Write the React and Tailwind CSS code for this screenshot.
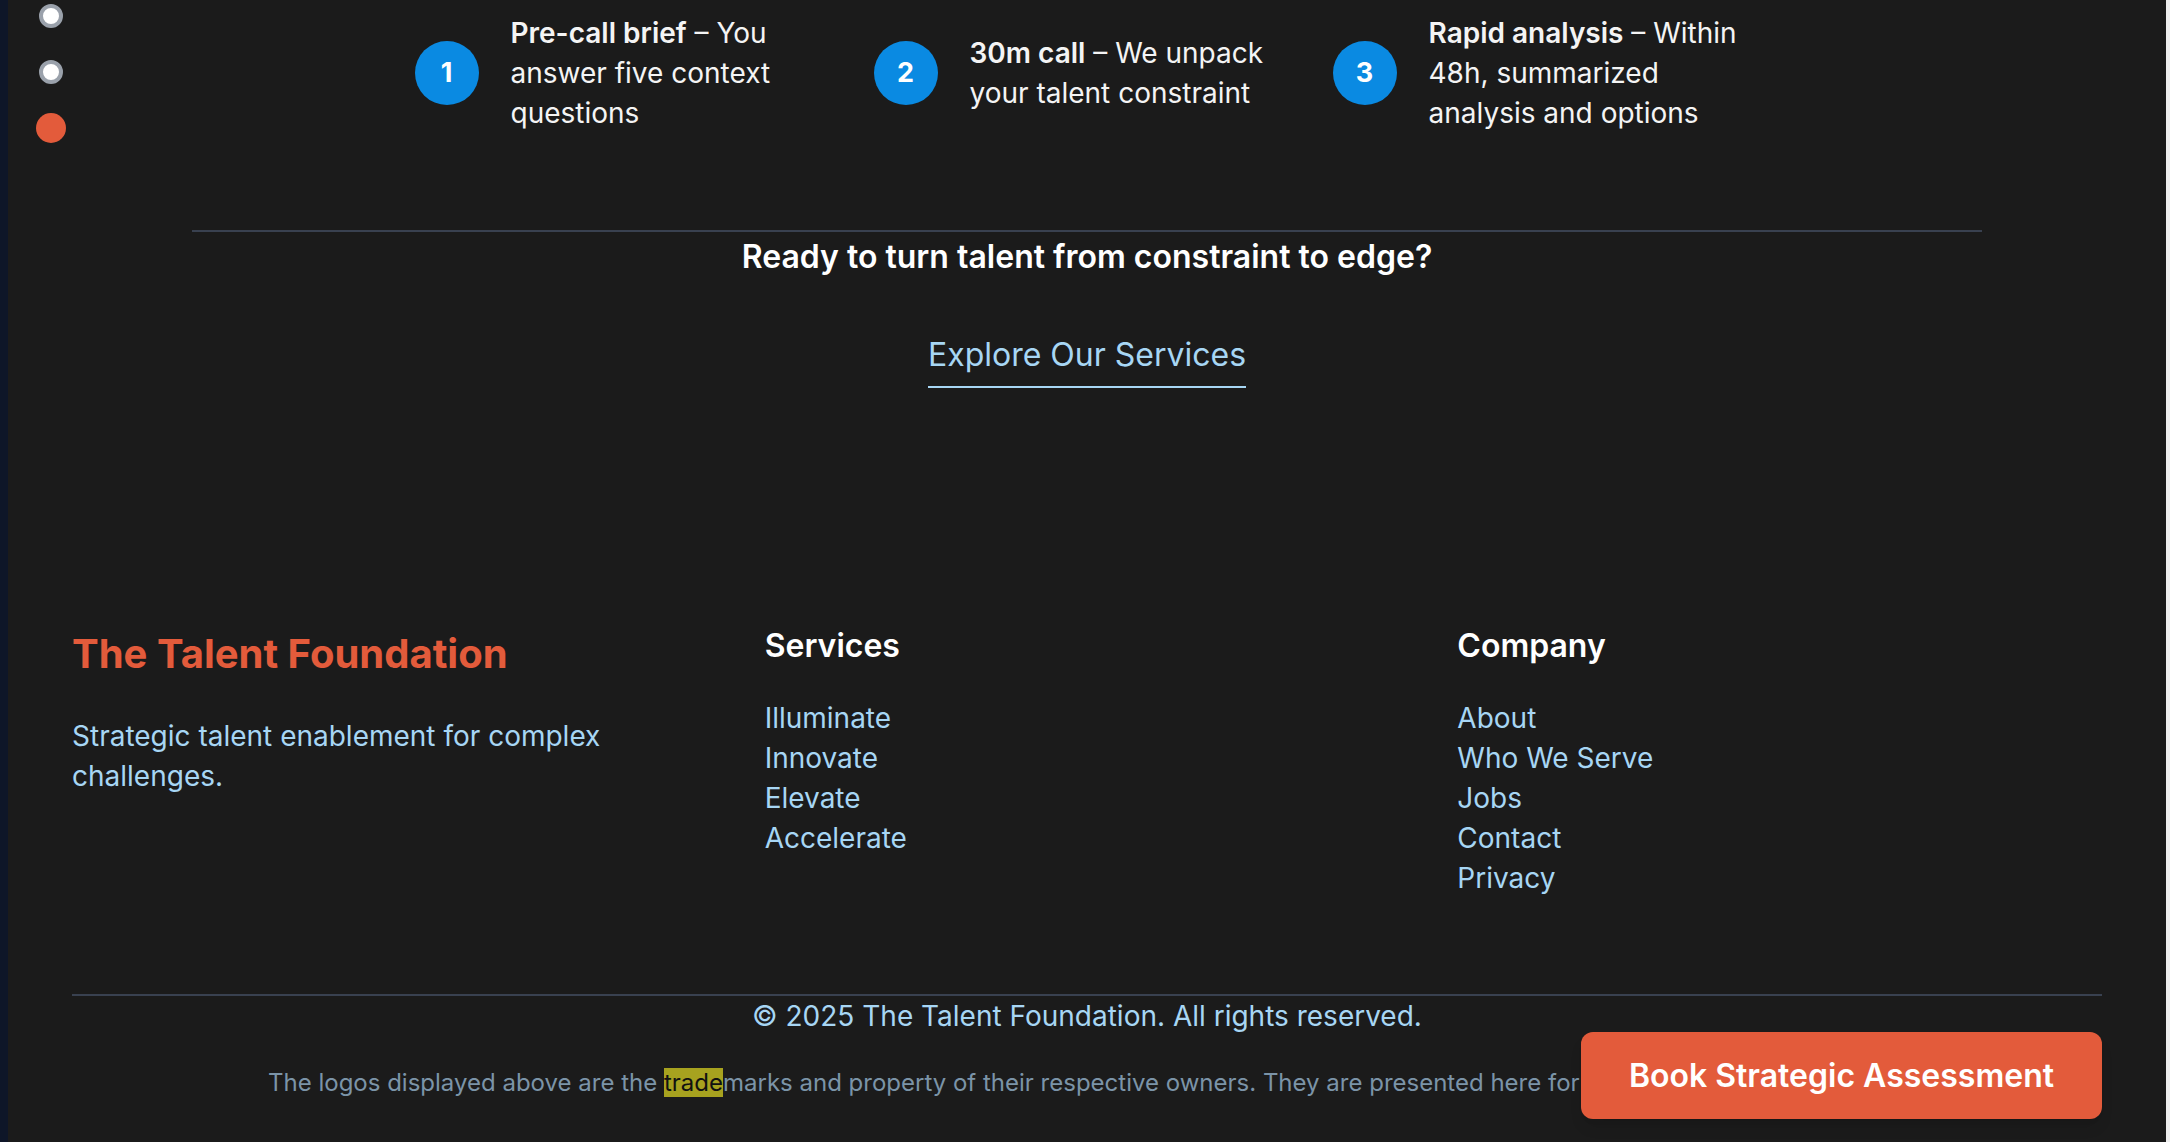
import React from 'react';

// Footer / call-to-action section of a consulting landing page
const steps = [
  { n: 1, title: 'Pre-call brief', text: 'You answer five context questions' },
  { n: 2, title: '30m call', text: 'We unpack your talent constraint' },
  { n: 3, title: 'Rapid analysis', text: 'Within 48h, summarized analysis and options' },
];

const services = ['Illuminate', 'Innovate', 'Elevate', 'Accelerate'];
const company = ['About', 'Who We Serve', 'Jobs', 'Contact', 'Privacy'];

export default function App() {
  return (
    <div
      className="flex w-full h-[1142px] overflow-hidden"
      style={{ fontFamily: 'Inter, "Noto Sans", sans-serif' }}
    >
      <div className="w-2 shrink-0 bg-[#0e1628]" />

      <div className="relative flex-1 min-w-0 bg-[#1b1b1b] overflow-hidden">
        {/* section nav dots */}
        <div className="absolute left-[28px] top-[4px] flex flex-col items-center">
          <span className="w-6 h-6 rounded-full bg-white border-4 border-[#9aa1ab]" />
          <span className="w-6 h-6 mt-8 rounded-full bg-white border-4 border-[#9aa1ab]" />
          <span className="w-[30px] h-[30px] mt-[29px] rounded-full bg-[#e35b3b]" />
        </div>

        {/* steps */}
        <div className="pt-[13px] pr-[11px] flex justify-center gap-[43px]">
          {steps.map(s => (
            <div key={s.n} className="flex items-center gap-8">
              <div className="w-16 h-16 shrink-0 rounded-full bg-[#0a8ae2] flex items-center justify-center text-white text-[27px] font-bold">
                {s.n}
              </div>
              <p className="max-w-[320px] text-[28px] leading-10 text-[#f4f4f4]">
                <span className="font-semibold">{s.title}</span> – {s.text}
              </p>
            </div>
          ))}
        </div>

        {/* CTA */}
        <div className="mx-[184px] mt-[97px] border-t-2 border-[#394150] pt-[6px] text-center">
          <h2 className="text-[32px] leading-[38px] font-semibold text-white">
            Ready to turn talent from constraint to edge?
          </h2>
          <a className="inline-block mt-[59px] text-[32px] leading-10 text-[#a7d6f4] pb-[11px] border-b-2 border-[#a7d6f4]">
            Explore Our Services
          </a>
        </div>

        {/* footer */}
        <footer className="px-16 mt-[240px]">
          <div className="grid grid-cols-3 gap-12">
            <div>
              <h3 className="text-[40px] leading-[48px] font-bold text-[#e35b3b] mt-[2px]">
                The Talent Foundation
              </h3>
              <p className="mt-[38px] text-[28px] leading-10 text-[#a7d6f4]">
                Strategic talent enablement for complex challenges.
              </p>
            </div>
            <div>
              <h4 className="text-[32px] leading-9 font-semibold text-white">Services</h4>
              <ul className="mt-[34px]">
                {services.map(item => (
                  <li key={item} className="text-[28px] leading-10 text-[#a7d6f4]">{item}</li>
                ))}
              </ul>
            </div>
            <div>
              <h4 className="text-[32px] leading-9 font-semibold text-white">Company</h4>
              <ul className="mt-[34px]">
                {company.map(item => (
                  <li key={item} className="text-[28px] leading-10 text-[#a7d6f4]">{item}</li>
                ))}
              </ul>
            </div>
          </div>

          <div className="mt-[96px] border-t-2 border-[#394150] overflow-hidden">
            <p className="text-center text-[28px] leading-10 text-[#a7d6f4]">
              © 2025 The Talent Foundation. All rights reserved.
            </p>
            <p className="mt-[31px] pl-[196px] whitespace-nowrap text-[24px] leading-8 text-[#7b94a8]">
              The logos displayed above are the <mark className="bg-[#a7a21f] text-[#111]">trade</mark>marks and property of their respective owners. They are presented here for identification purposes only and do not imply endorsement.
            </p>
          </div>
        </footer>

        <button className="absolute right-16 bottom-[23px] h-[87px] px-12 rounded-xl bg-[#e35b3b] text-white text-[32px] font-semibold shadow-lg">
          Book Strategic Assessment
        </button>
      </div>

      <div className="w-1 shrink-0 bg-[#efefef]" />
    </div>
  );
}
